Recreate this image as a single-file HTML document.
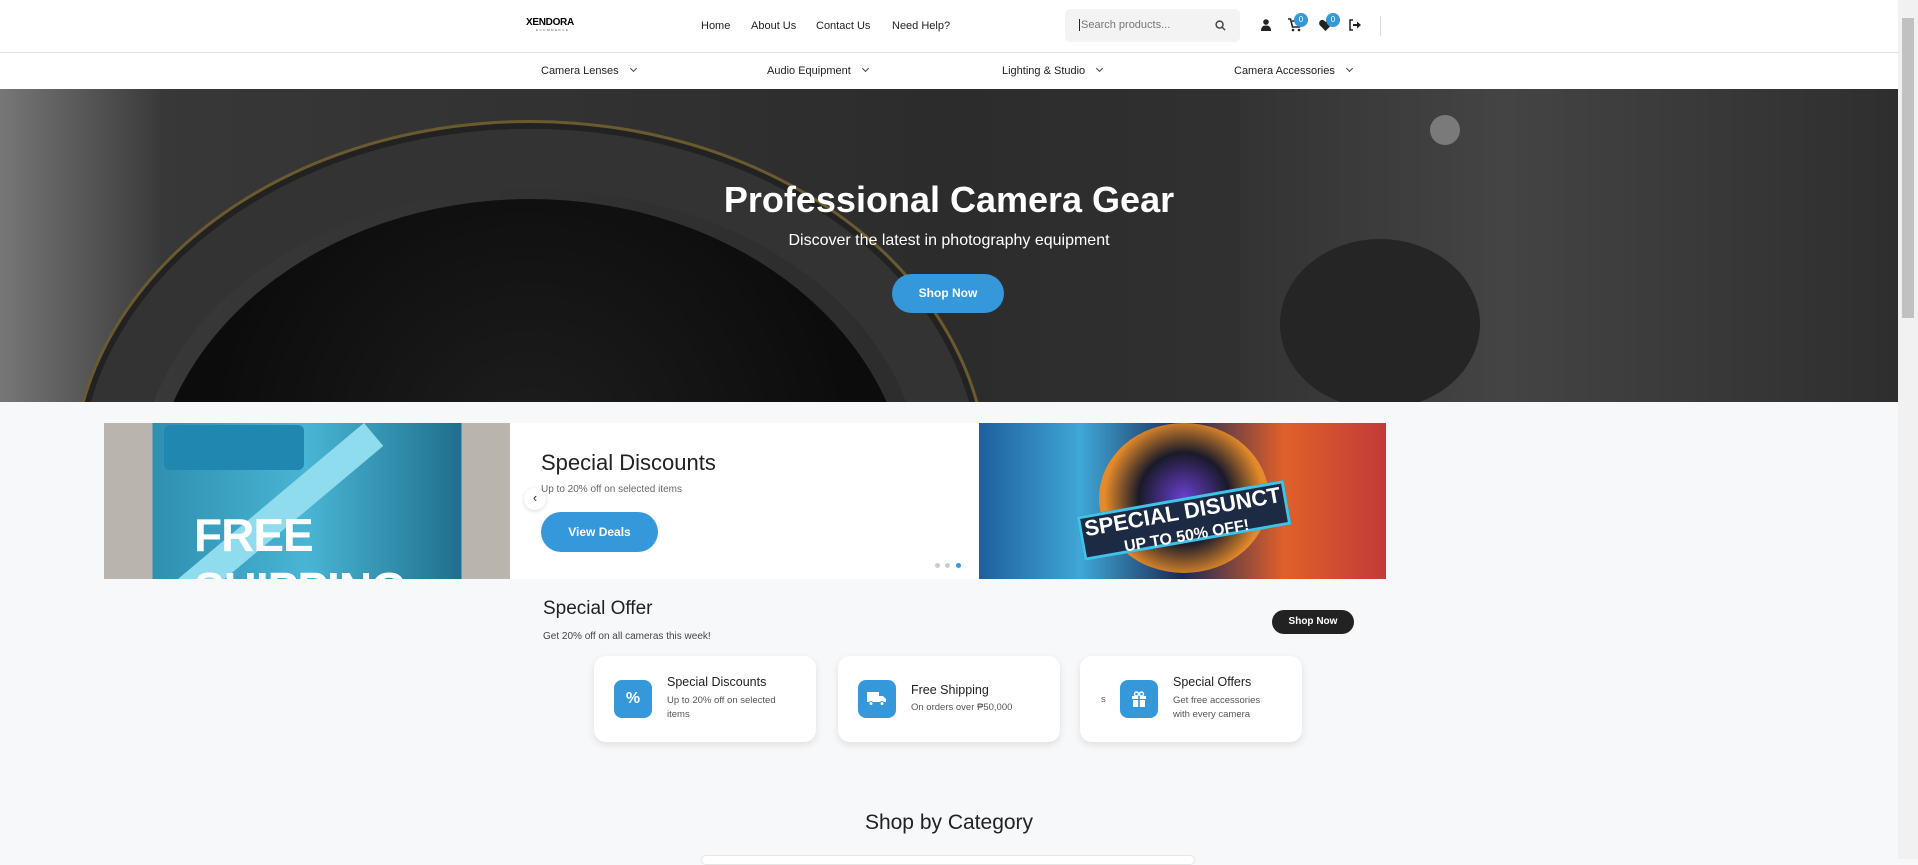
<!DOCTYPE html>
<html><head><meta charset="utf-8"><style>
*{box-sizing:border-box;margin:0;padding:0}
body{width:1918px;height:859px;overflow:hidden;background:#f7f8fa;font-family:"Liberation Sans",sans-serif;color:#222;position:relative}
.a{position:absolute}
.hdr{left:0;top:0;width:1898px;height:53px;background:#fff;border-bottom:1px solid #ddd}
.nav2{left:0;top:53px;width:1898px;height:36px;background:#fff}
.lk{font-size:11px;color:#222;top:20px}
.cat{font-size:11px;color:#222;top:65px}
.cat:after{content:"";display:inline-block;width:4px;height:4px;border-right:1.2px solid #444;border-bottom:1.2px solid #444;transform:rotate(45deg);margin-left:12px;position:relative;top:-3px}
.hero{left:0;top:89px;width:1898px;height:313px;background:linear-gradient(90deg,#3a3a3a,#2c2c2c 50%,#3a3a3a);overflow:hidden}
.btn{background:#3498db;color:#fff;font-weight:bold;text-align:center;border-radius:20px}
.card{background:#fff;border-radius:12px;box-shadow:0 3px 8px rgba(0,0,0,.1);width:222px;height:86px}
.ic{width:38px;height:38px;border-radius:8px;background:#3498db;top:24px;color:#fff;text-align:center;line-height:38px;font-weight:bold;font-size:16px}
.ct{font-size:12.5px;color:#222;position:absolute}
.cs{font-size:9.5px;color:#555;position:absolute;line-height:14px}
.sb{left:1898px;top:0;width:20px;height:859px;background:#f1f1f1}
</style></head><body>
<div class="a hdr"></div>
<div class="a" style="left:526px;top:17px;font-weight:900;font-size:10px;letter-spacing:-.3px;color:#000">XENDORA<div style="font-size:3px;letter-spacing:1.5px;color:#555;font-weight:normal;margin-left:10px">ECOMMERCE</div></div>
<div class="a lk" style="left:701px">Home</div>
<div class="a lk" style="left:751px">About Us</div>
<div class="a lk" style="left:816px">Contact Us</div>
<div class="a lk" style="left:892px">Need Help?</div>
<div class="a" style="left:1065px;top:9px;width:175px;height:33px;background:#f3f3f3;border-radius:5px"><span style="position:absolute;left:14px;top:10px;font-size:11px;color:#777;border-left:1px solid #222;padding-left:1px">Search products...</span>
<svg style="position:absolute;left:150px;top:11px" width="11" height="11" viewBox="0 0 12 12"><circle cx="5" cy="5" r="3.8" fill="none" stroke="#444" stroke-width="1.6"/><path d="M8 8l3 3" stroke="#444" stroke-width="1.6"/></svg></div>
<svg class="a" style="left:1261px;top:19px" width="10" height="12" viewBox="0 0 10 12"><circle cx="5" cy="3" r="2.8" fill="#222"/><path d="M0 12c0-4 2-5.5 5-5.5s5 1.5 5 5.5z" fill="#222"/></svg>
<svg class="a" style="left:1288px;top:18px" width="14" height="14" viewBox="0 0 14 14"><path d="M0 1h2.5l2 8h7l1.5-6H4" fill="none" stroke="#222" stroke-width="1.6"/><circle cx="5" cy="12" r="1.3" fill="#222"/><circle cx="11" cy="12" r="1.3" fill="#222"/></svg>
<div class="a" style="left:1294px;top:13px;width:14px;height:14px;border-radius:7px;background:#3498db;color:#fff;font-size:8px;text-align:center;line-height:14px">0</div>
<svg class="a" style="left:1319px;top:19px" width="13" height="12" viewBox="0 0 13 12"><path d="M6.5 12L1 6.5C-1 4 1 0 4 1c1.2.4 2 1.3 2.5 2 .5-.7 1.3-1.6 2.5-2 3-1 5 3 3 5.5z" fill="#222"/></svg>
<div class="a" style="left:1326px;top:13px;width:14px;height:14px;border-radius:7px;background:#3498db;color:#fff;font-size:8px;text-align:center;line-height:14px">0</div>
<svg class="a" style="left:1349px;top:19px" width="12" height="12" viewBox="0 0 12 12"><path d="M4 1H1v10h3" fill="none" stroke="#222" stroke-width="1.5"/><path d="M4 5h4V2.5L12 6l-4 3.5V7H4z" fill="#222"/></svg>
<div class="a" style="left:1380px;top:16px;width:1px;height:20px;background:#ddd"></div>
<div class="a nav2"></div>
<div class="a cat" style="left:541px">Camera Lenses</div>
<div class="a cat" style="left:767px">Audio Equipment</div>
<div class="a cat" style="left:1002px">Lighting &amp; Studio</div>
<div class="a cat" style="left:1234px">Camera Accessories</div>
<div class="a hero">
<div class="a" style="left:0;top:0;width:160px;height:313px;background:linear-gradient(90deg,#777,#3a3a3a)"></div>
<div class="a" style="left:80px;top:40px;width:900px;height:700px;border-radius:50%;border:60px solid #333;box-shadow:0 0 0 6px #222,0 0 0 9px #6b5a30"></div>
<div class="a" style="left:150px;top:110px;width:760px;height:620px;border-radius:50%;background:radial-gradient(ellipse at 50% 40%,#1e1e1e,#0c0c0c 60%)"></div>
<div class="a" style="left:1240px;top:0;width:660px;height:313px;background:linear-gradient(90deg,#333,#444 40%,#2e2e2e)"></div>
<div class="a" style="left:1280px;top:150px;width:200px;height:170px;border-radius:50%;background:#252525"></div>
<div class="a" style="left:1430px;top:26px;width:30px;height:30px;border-radius:50%;background:#7a7a7a"></div>
<div class="a" style="left:0;top:90px;width:1898px;text-align:center;color:#fff;font-weight:bold;font-size:36px">Professional Camera Gear</div>
<div class="a" style="left:0;top:143px;width:1898px;text-align:center;color:#fff;font-size:16px">Discover the latest in photography equipment</div>
<div class="a btn" style="left:892px;top:185px;width:112px;height:39px;line-height:39px;font-size:12px">Shop Now</div>
</div>
<div class="a" style="left:104px;top:423px;width:406px;height:156px;background:linear-gradient(90deg,#b9b5ae 0,#b9b5ae 12%,#2f8fb0 12%,#49b5d4 50%,#1f6f8d 88%,#b9b5ae 88%);overflow:hidden">
<div class="a" style="left:60px;top:2px;width:140px;height:45px;background:#1f87b0;border-radius:6px"></div>
<div class="a" style="left:40px;top:80px;width:260px;height:30px;background:#8fdcef;transform:rotate(-40deg)"></div>
<div class="a" style="left:90px;top:85px;font-weight:900;color:#fff;font-size:46px;letter-spacing:-1px">FREE<br>SHIPPING</div></div>
<div class="a" style="left:510px;top:423px;width:469px;height:156px;background:#fff"></div>
<div class="a" style="left:541px;top:450px;font-size:22px;color:#222">Special Discounts</div>
<div class="a" style="left:541px;top:484px;font-size:10px;color:#666">Up to 20% off on selected items</div>
<div class="a" style="left:524px;top:488px;width:22px;height:22px;border-radius:50%;background:#fff;box-shadow:0 1px 4px rgba(0,0,0,.15);text-align:center;line-height:20px;font-size:13px">‹</div>
<div class="a btn" style="left:541px;top:512px;width:117px;height:40px;line-height:40px;font-size:12px">View Deals</div>
<div class="a" style="left:935px;top:563px;width:5px;height:5px;border-radius:50%;background:#ccc"></div>
<div class="a" style="left:945px;top:563px;width:5px;height:5px;border-radius:50%;background:#ccc"></div>
<div class="a" style="left:956px;top:563px;width:5px;height:5px;border-radius:50%;background:#3498db"></div>
<div class="a" style="left:979px;top:423px;width:407px;height:156px;background:linear-gradient(90deg,#1d5f9e,#3fa7d6 25%,#1c2a55 50%,#e0602a 75%,#c23a3a);overflow:hidden">
<div class="a" style="left:120px;top:0;width:170px;height:150px;border-radius:50%;background:radial-gradient(circle,#6a3fd1 0,#1a1a2a 40%,#e48a2a 70%)"></div>
<div class="a" style="left:100px;top:75px;width:210px;height:45px;background:#1d2a44;border:3px solid #3fc3e8;transform:rotate(-10deg);color:#fff;font-weight:900;font-size:22px;text-align:center;line-height:22px">SPECIAL DISUNCT<br><span style="font-size:16px">UP TO 50% OFF!</span></div></div>
<div class="a" style="left:543px;top:598px;font-size:19px;color:#222">Special Offer</div>
<div class="a" style="left:543px;top:631px;font-size:10px;color:#444">Get 20% off on all cameras this week!</div>
<div class="a" style="left:1272px;top:610px;width:82px;height:24px;border-radius:12px;background:#222;color:#fff;font-size:10px;font-weight:bold;text-align:center;line-height:24px">Shop Now</div>
<div class="a card" style="left:594px;top:656px"><div class="a ic" style="left:20px">%</div><div class="ct" style="left:73px;top:19px">Special Discounts</div><div class="cs" style="left:73px;top:38px">Up to 20% off on selected<br>items</div></div>
<div class="a card" style="left:838px;top:656px"><div class="a ic" style="left:20px"><svg width="20" height="14" viewBox="0 0 20 14" style="margin-top:12px"><path d="M0 0h12v10H0zM12 4h4l3 3v3h-7z" fill="#fff"/><circle cx="4" cy="11.5" r="2" fill="#fff" stroke="#3498db"/><circle cx="15" cy="11.5" r="2" fill="#fff" stroke="#3498db"/></svg></div><div class="ct" style="left:73px;top:27px">Free Shipping</div><div class="cs" style="left:73px;top:45px">On orders over ₱50,000</div></div>
<div class="a card" style="left:1080px;top:656px"><div class="cs" style="left:21px;top:37px">s</div><div class="a ic" style="left:40px"><svg width="16" height="16" viewBox="0 0 16 16" style="margin-top:11px"><rect x="1" y="5" width="14" height="3" fill="#fff"/><rect x="2" y="9" width="12" height="7" fill="#fff"/><rect x="7.2" y="5" width="1.6" height="11" fill="#3498db"/><circle cx="5.5" cy="3" r="2" fill="none" stroke="#fff" stroke-width="1.4"/><circle cx="10.5" cy="3" r="2" fill="none" stroke="#fff" stroke-width="1.4"/></svg></div><div class="ct" style="left:93px;top:19px">Special Offers</div><div class="cs" style="left:93px;top:38px">Get free accessories<br>with every camera</div></div>
<div class="a" style="left:0;top:811px;width:1898px;text-align:center;font-size:21px;color:#222">Shop by Category</div>
<div class="a" style="left:701px;top:855px;width:494px;height:10px;background:#fff;border:1px solid #e5e5e5;border-radius:6px"></div>
<div class="a sb"><div style="position:absolute;left:4px;top:18px;width:12px;height:300px;background:#c1c1c1"></div></div>
</body></html>
